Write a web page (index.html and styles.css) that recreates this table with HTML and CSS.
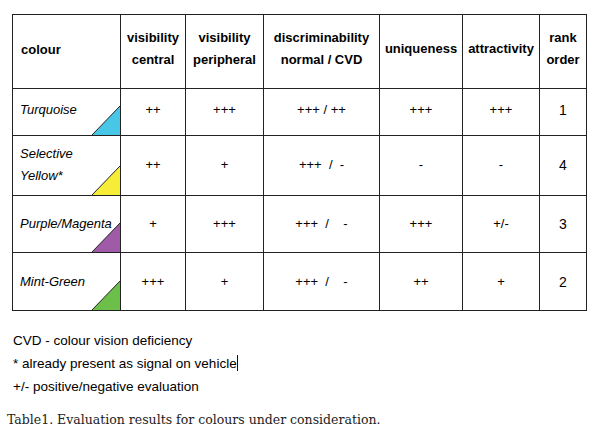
FILE: index.html
```html
<!DOCTYPE html>
<html lang="en">
<head>
    <meta charset="UTF-8">
    <title>Evaluation results for colours</title>
    <link rel="stylesheet" href="styles.css">
</head>
<body>
    <table class="eval-table">
        <colgroup>
            <col style="width: 108px">
            <col style="width: 65px">
            <col style="width: 78px">
            <col style="width: 116px">
            <col style="width: 83px">
            <col style="width: 77px">
            <col style="width: 47px">
        </colgroup>
        <tr class="head-row">
            <th class="colour-head">colour</th>
            <th>visibility<br>central</th>
            <th>visibility<br>peripheral</th>
            <th>discriminability<br>normal / CVD</th>
            <th>uniqueness</th>
            <th>attractivity</th>
            <th>rank<br>order</th>
        </tr>
        <tr class="row-1">
            <td class="colour-cell">Turquoise
                <svg class="swatch" width="28" height="29" viewBox="0 0 28 29"><polygon points="0,29 28,0 28,29" fill="#47c6e6"/><line x1="0" y1="29" x2="28" y2="0" stroke="#222" stroke-width="1"/></svg>
            </td>
            <td>++</td>
            <td>+++</td>
            <td>+++ / ++</td>
            <td>+++</td>
            <td>+++</td>
            <td class="rank">1</td>
        </tr>
        <tr class="row-2">
            <td class="colour-cell">Selective<br>Yellow*
                <svg class="swatch" width="28" height="29" viewBox="0 0 28 29"><polygon points="0,29 28,0 28,29" fill="#f7ec37"/><line x1="0" y1="29" x2="28" y2="0" stroke="#222" stroke-width="1"/></svg>
            </td>
            <td>++</td>
            <td>+</td>
            <td class="pre">+++  /  -</td>
            <td>-</td>
            <td>-</td>
            <td class="rank">4</td>
        </tr>
        <tr class="row-3">
            <td class="colour-cell">Purple/Magenta
                <svg class="swatch" width="28" height="29" viewBox="0 0 28 29"><polygon points="0,29 28,0 28,29" fill="#a05ba8"/><line x1="0" y1="29" x2="28" y2="0" stroke="#222" stroke-width="1"/></svg>
            </td>
            <td>+</td>
            <td>+++</td>
            <td class="pre">+++  /    -</td>
            <td>+++</td>
            <td>+/-</td>
            <td class="rank">3</td>
        </tr>
        <tr class="row-4">
            <td class="colour-cell">Mint-Green
                <svg class="swatch" width="28" height="29" viewBox="0 0 28 29"><polygon points="0,29 28,0 28,29" fill="#6cc04a"/><line x1="0" y1="29" x2="28" y2="0" stroke="#222" stroke-width="1"/></svg>
            </td>
            <td>+++</td>
            <td>+</td>
            <td class="pre">+++  /    -</td>
            <td>++</td>
            <td>+</td>
            <td class="rank">2</td>
        </tr>
    </table>

    <div class="notes">
        <p>CVD - colour vision deficiency</p>
        <p>* already present as signal on vehicle<span class="cursor"></span></p>
        <p>+/- positive/negative evaluation</p>
    </div>

    <p class="caption">Table1. Evaluation results for colours under consideration.</p>
</body>
</html>
```

FILE: styles.css
```css
body {
    margin: 0;
    background: #fff;
    color: #111;
    font-family: "Liberation Sans", Arial, sans-serif;
}

.eval-table {
    margin: 14px 0 0 12px;
    width: 575px;
    table-layout: fixed;
    border-collapse: collapse;
    border: 1px solid #222;
    font-size: 13px;
    line-height: 22px;
    color: #000;
}

.eval-table th,
.eval-table td {
    border: 1px solid #222;
    padding: 0;
    text-align: center;
    vertical-align: middle;
    white-space: nowrap;
}

.eval-table th {
    font-weight: bold;
    padding-bottom: 6px;
}

.eval-table th.colour-head {
    text-align: left;
    padding-left: 8px;
    padding-bottom: 4px;
}

.head-row { height: 74px; }
.row-1 { height: 47px; }
.row-2 { height: 60px; }
.row-3 { height: 57px; }
.row-4 { height: 58px; }

.eval-table td.colour-cell {
    position: relative;
    text-align: left;
    padding-left: 7px;
    font-style: italic;
}

.row-1 td { padding-bottom: 4px; }
.row-2 td { padding-bottom: 2px; }

.swatch {
    position: absolute;
    right: 0;
    bottom: 0;
    display: block;
}

.eval-table td.pre {
    white-space: pre;
}

.eval-table td.rank {
    font-size: 14px;
}

.notes {
    margin: 18px 0 0 13px;
    font-size: 13.5px;
    line-height: 23px;
    color: #000;
}

.notes p {
    margin: 0;
}

.cursor {
    display: inline-block;
    width: 1px;
    height: 16px;
    background: #111;
    vertical-align: -3px;
}

.caption {
    margin: 14px 0 0 7px;
    font-family: "DejaVu Serif", "Liberation Serif", serif;
    font-size: 12.5px;
    color: #222;
}
```
